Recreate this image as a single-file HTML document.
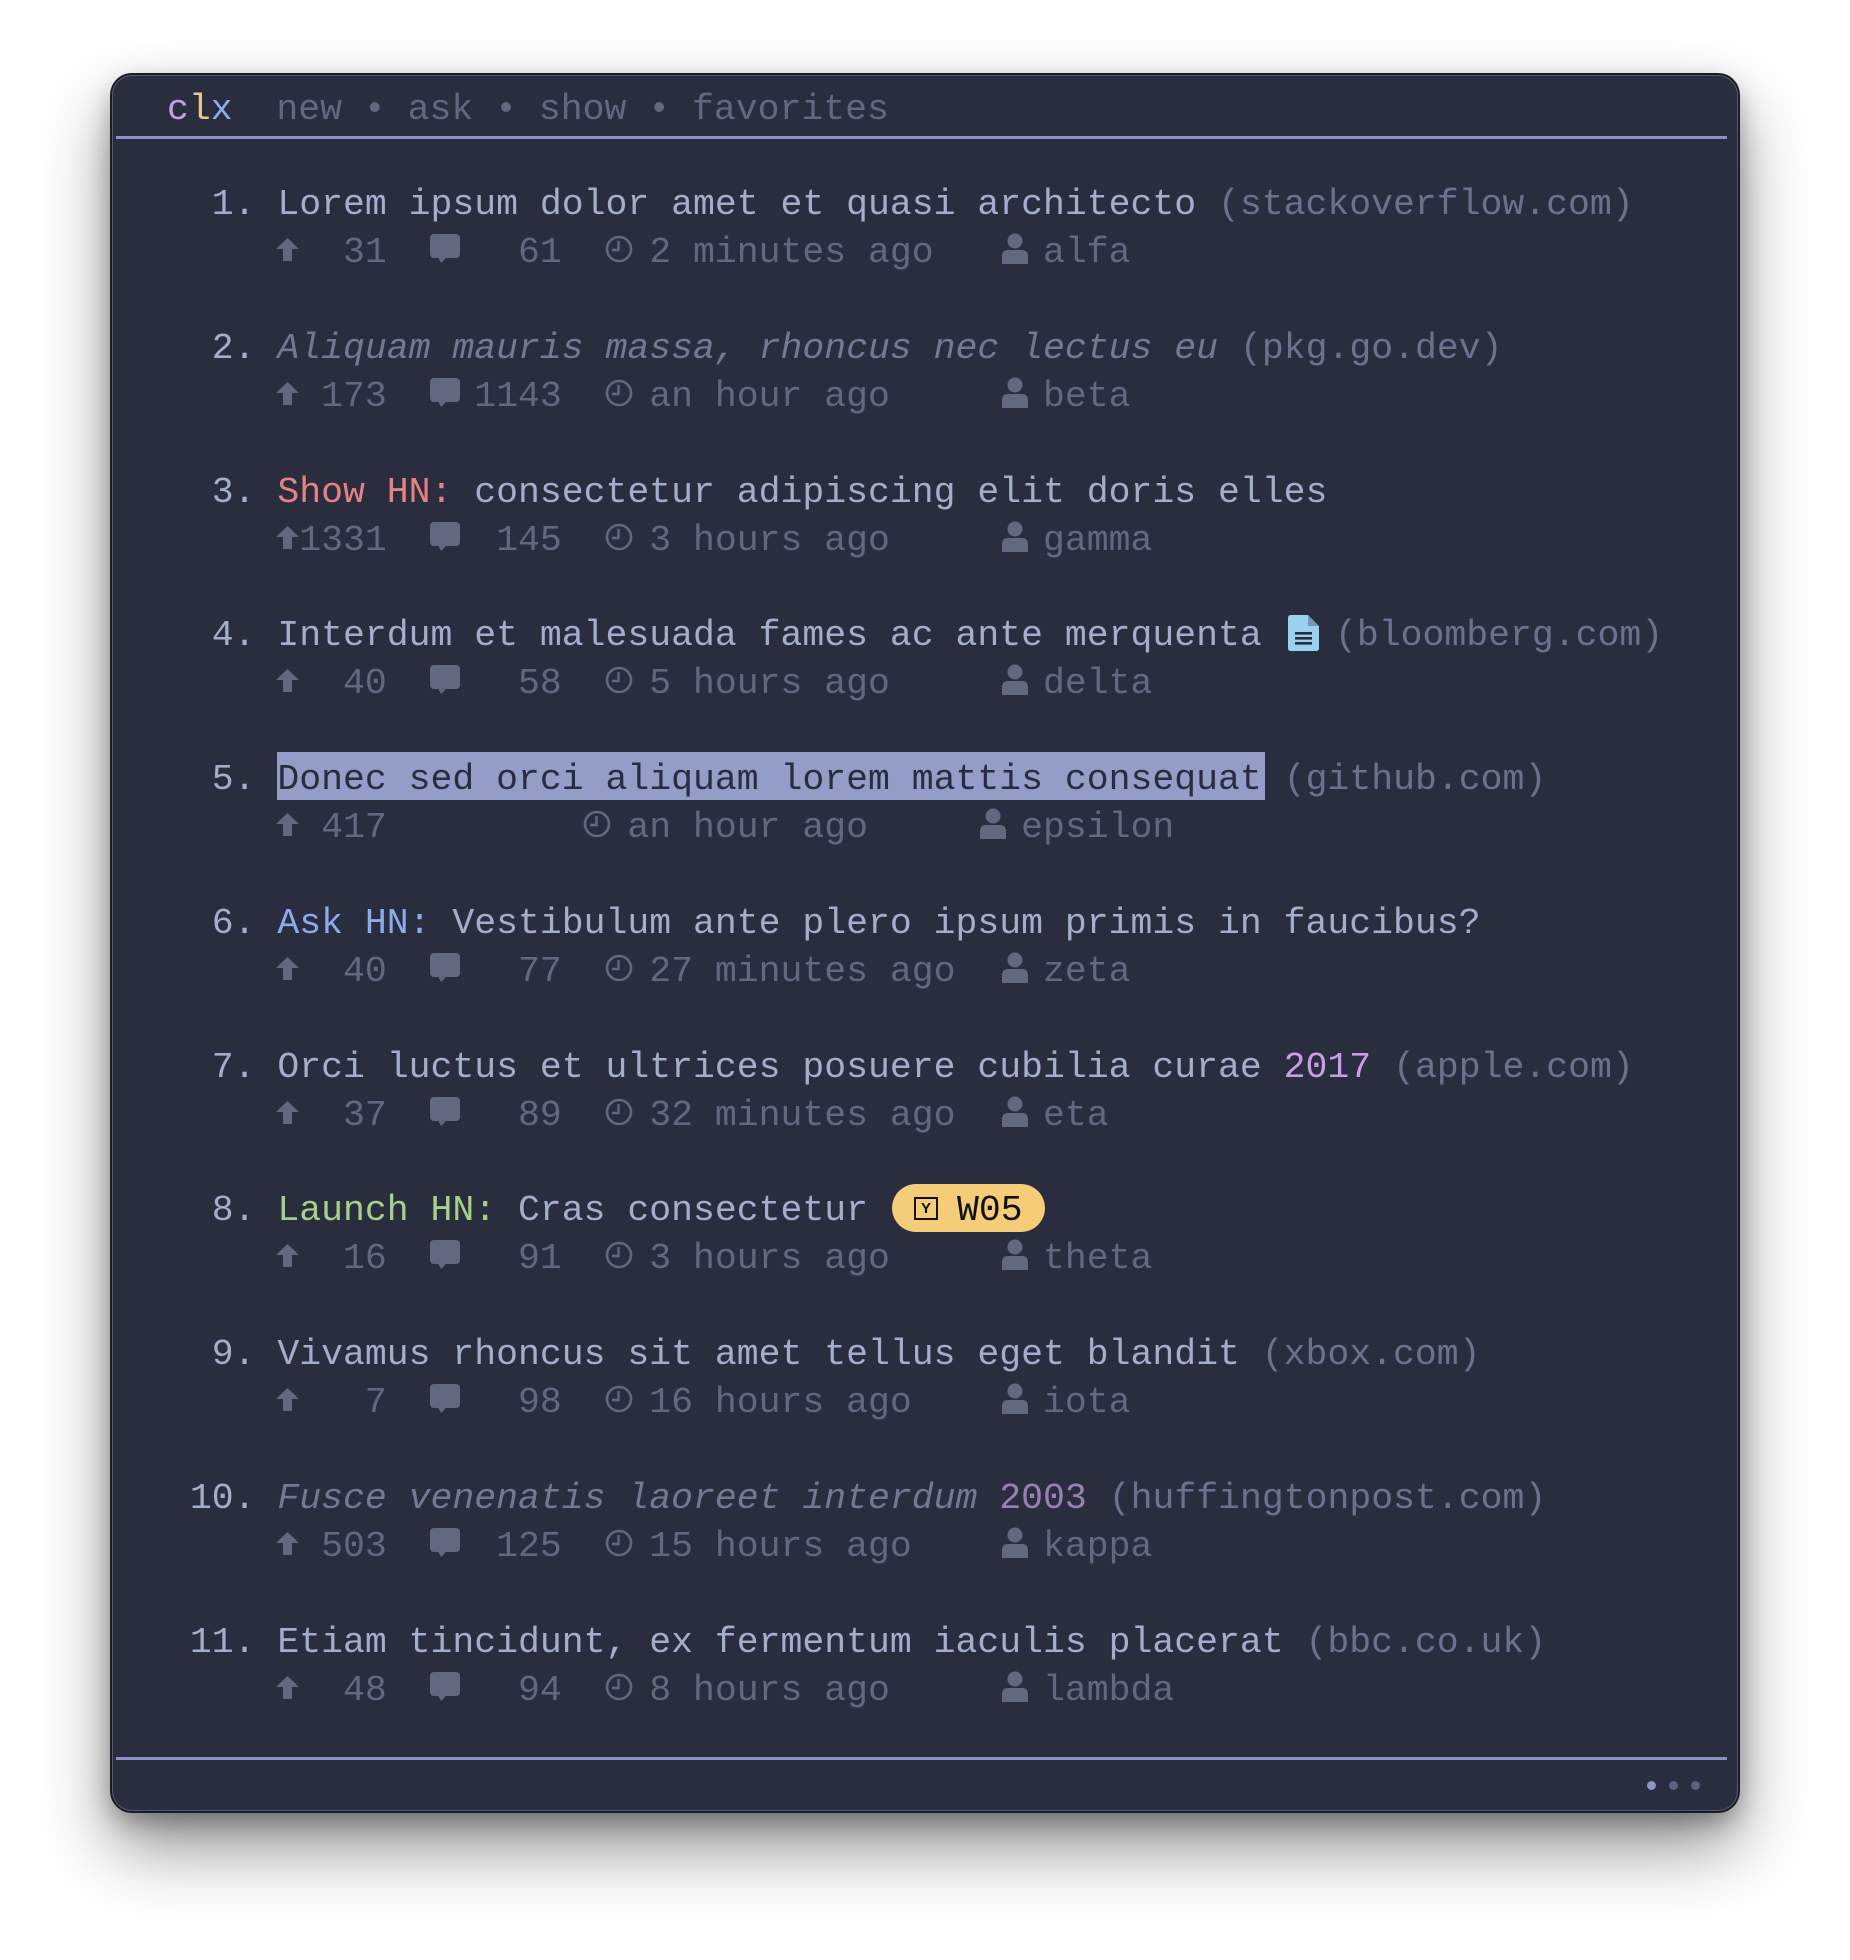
<!DOCTYPE html>
<html><head><meta charset="utf-8"><style>
html,body{margin:0;padding:0;background:#fff;}
body{width:1850px;height:1960px;position:relative;overflow:hidden;font-family:"Liberation Mono",monospace;font-size:36.46px;}
.win{position:absolute;left:112px;top:75px;width:1626px;height:1736px;border-radius:20px;background:#2a2d3e;box-shadow:0 0 0 2px #1a1b24,0 0 0 1px #55596c inset,0 35px 70px rgba(0,0,0,.45),0 10px 25px rgba(0,0,0,.3);}
.l{position:absolute;left:168px;white-space:pre;line-height:48px;height:48px;color:#a5adce;padding-top:4px;}
.m{color:#626880;}
.d{color:#6c7190;}
.it{font-style:italic;color:#737994;}
.ic{position:absolute;}
.hlb{position:absolute;background:#949cc8;}
.line{position:absolute;height:3px;background:#8c93c4;}
.dot{position:absolute;width:9px;height:9px;border-radius:50%;}
</style></head><body>
<div class="win"></div>
<div class="l" style="top:82px;left:167px"><span style="color:#ca9ee6">c</span><span style="color:#e5c890">l</span><span style="color:#8caaee">x</span><span class="m">  new • ask • show • favorites</span></div>
<div class="line" style="left:116px;width:1611px;top:136px"></div>
<div class="line" style="left:116px;width:1611px;top:1757px"></div>
<div class="dot" style="left:1647px;top:1781px;background:#8c93c4"></div>
<div class="dot" style="left:1669px;top:1781px;background:#5d6180"></div>
<div class="dot" style="left:1691px;top:1781px;background:#5d6180"></div>

<svg width="0" height="0" style="position:absolute">
<defs>
<symbol id="up" viewBox="0 0 23 23"><polygon points="11.5,0 23,11 16,11 16,23 7,23 7,11 0,11" fill="#626880"/></symbol>
<symbol id="cm" viewBox="0 0 30 29"><rect x="0" y="0" width="30" height="24" rx="4" fill="#626880"/><polygon points="8,23 17,23 11,29" fill="#626880"/></symbol>
<symbol id="ck" viewBox="0 0 28 28"><circle cx="14" cy="14" r="12" fill="none" stroke="#626880" stroke-width="2.6"/><path d="M13.5 6V15H7" fill="none" stroke="#626880" stroke-width="2.4"/></symbol>
<symbol id="us" viewBox="0 0 26 31"><circle cx="13" cy="8" r="7.5" fill="#626880"/><path d="M0 31V23Q0 17 6 17H20Q26 17 26 23V31Z" fill="#626880"/></symbol>
</defs></svg>

<!-- 1 -->
<div class="l" style="top:177px">  1. Lorem ipsum dolor amet et quasi architecto <span class="d">(stackoverflow.com)</span></div>
<div class="l m" style="top:225px">        31      61    2 minutes ago     alfa</div>
<svg class="ic" style="left:276px;top:238px" width="23" height="23"><use href="#up"/></svg>
<svg class="ic" style="left:430px;top:234px" width="30" height="29"><use href="#cm"/></svg>
<svg class="ic" style="left:605px;top:235px" width="28" height="28"><use href="#ck"/></svg>
<svg class="ic" style="left:1002px;top:233px" width="26" height="31"><use href="#us"/></svg>
<!-- 2 -->
<div class="l" style="top:320.75px">  2. <span class="it">Aliquam mauris massa, rhoncus nec lectus eu</span> <span class="d">(pkg.go.dev)</span></div>
<div class="l m" style="top:368.75px">       173    1143    an hour ago       beta</div>
<svg class="ic" style="left:276px;top:381.75px" width="23" height="23"><use href="#up"/></svg>
<svg class="ic" style="left:430px;top:377.75px" width="30" height="29"><use href="#cm"/></svg>
<svg class="ic" style="left:605px;top:378.75px" width="28" height="28"><use href="#ck"/></svg>
<svg class="ic" style="left:1002px;top:376.75px" width="26" height="31"><use href="#us"/></svg>
<!-- 3 -->
<div class="l" style="top:464.5px">  3. <span style="color:#e78284">Show HN:</span> consectetur adipiscing elit doris elles</div>
<div class="l m" style="top:512.5px">      1331     145    3 hours ago       gamma</div>
<svg class="ic" style="left:276px;top:525.5px" width="23" height="23"><use href="#up"/></svg>
<svg class="ic" style="left:430px;top:521.5px" width="30" height="29"><use href="#cm"/></svg>
<svg class="ic" style="left:605px;top:522.5px" width="28" height="28"><use href="#ck"/></svg>
<svg class="ic" style="left:1002px;top:520.5px" width="26" height="31"><use href="#us"/></svg>
<!-- 4 -->
<div class="l" style="top:608.25px">  4. Interdum et malesuada fames ac ante merquenta</div>
<svg class="ic" style="left:1288px;top:615px" width="31" height="36" viewBox="0 0 31 36"><path d="M3 0H20L31 11V33Q31 36 28 36H3Q0 36 0 33V3Q0 0 3 0Z" fill="#99d1f0"/><path d="M20 0V11H31" fill="#2a2d3e" opacity=".35"/><rect x="7" y="17" width="17" height="2.6" fill="#2a2d3e"/><rect x="7" y="22" width="17" height="2.6" fill="#2a2d3e"/><rect x="7" y="27" width="17" height="2.6" fill="#2a2d3e"/></svg>
<div class="l d" style="top:608.25px;left:1335px">(bloomberg.com)</div>
<div class="l m" style="top:656.25px">        40      58    5 hours ago       delta</div>
<svg class="ic" style="left:276px;top:669.25px" width="23" height="23"><use href="#up"/></svg>
<svg class="ic" style="left:430px;top:665.25px" width="30" height="29"><use href="#cm"/></svg>
<svg class="ic" style="left:605px;top:666.25px" width="28" height="28"><use href="#ck"/></svg>
<svg class="ic" style="left:1002px;top:664.25px" width="26" height="31"><use href="#us"/></svg>
<!-- 5 -->
<div class="hlb" style="left:277px;top:752px;width:988px;height:48px"></div>
<div class="l" style="top:752px">  5. <span style="color:#292c3c">Donec sed orci aliquam lorem mattis consequat</span> <span class="d">(github.com)</span></div>
<div class="l m" style="top:800px">       417           an hour ago       epsilon</div>
<svg class="ic" style="left:276px;top:813px" width="23" height="23"><use href="#up"/></svg>
<svg class="ic" style="left:583px;top:810px" width="28" height="28"><use href="#ck"/></svg>
<svg class="ic" style="left:980px;top:808px" width="26" height="31"><use href="#us"/></svg>
<!-- 6 -->
<div class="l" style="top:895.75px">  6. <span style="color:#8caaee">Ask HN:</span> Vestibulum ante plero ipsum primis in faucibus?</div>
<div class="l m" style="top:943.75px">        40      77    27 minutes ago    zeta</div>
<svg class="ic" style="left:276px;top:956.75px" width="23" height="23"><use href="#up"/></svg>
<svg class="ic" style="left:430px;top:952.75px" width="30" height="29"><use href="#cm"/></svg>
<svg class="ic" style="left:605px;top:953.75px" width="28" height="28"><use href="#ck"/></svg>
<svg class="ic" style="left:1002px;top:951.75px" width="26" height="31"><use href="#us"/></svg>
<!-- 7 -->
<div class="l" style="top:1039.5px">  7. Orci luctus et ultrices posuere cubilia curae <span style="color:#ca9ee6">2017</span> <span class="d">(apple.com)</span></div>
<div class="l m" style="top:1087.5px">        37      89    32 minutes ago    eta</div>
<svg class="ic" style="left:276px;top:1100.5px" width="23" height="23"><use href="#up"/></svg>
<svg class="ic" style="left:430px;top:1096.5px" width="30" height="29"><use href="#cm"/></svg>
<svg class="ic" style="left:605px;top:1097.5px" width="28" height="28"><use href="#ck"/></svg>
<svg class="ic" style="left:1002px;top:1095.5px" width="26" height="31"><use href="#us"/></svg>
<!-- 8 -->
<div class="l" style="top:1183.25px">  8. <span style="color:#a6d189">Launch HN:</span> Cras consectetur</div>
<div class="ic" style="left:892px;top:1184px;width:153px;height:48px;border-radius:24px;background:#f5cd78;"></div>
<div class="ic" style="left:914px;top:1197px;width:20px;height:19px;border:2px solid #111;font:bold 15px/19px 'Liberation Sans',sans-serif;text-align:center;color:#111">Y</div>
<div class="l" style="top:1183px;left:957px;color:#111">W05</div>
<div class="l m" style="top:1231.25px">        16      91    3 hours ago       theta</div>
<svg class="ic" style="left:276px;top:1244.25px" width="23" height="23"><use href="#up"/></svg>
<svg class="ic" style="left:430px;top:1240.25px" width="30" height="29"><use href="#cm"/></svg>
<svg class="ic" style="left:605px;top:1241.25px" width="28" height="28"><use href="#ck"/></svg>
<svg class="ic" style="left:1002px;top:1239.25px" width="26" height="31"><use href="#us"/></svg>
<!-- 9 -->
<div class="l" style="top:1327px">  9. Vivamus rhoncus sit amet tellus eget blandit <span class="d">(xbox.com)</span></div>
<div class="l m" style="top:1375px">         7      98    16 hours ago      iota</div>
<svg class="ic" style="left:276px;top:1388px" width="23" height="23"><use href="#up"/></svg>
<svg class="ic" style="left:430px;top:1384px" width="30" height="29"><use href="#cm"/></svg>
<svg class="ic" style="left:605px;top:1385px" width="28" height="28"><use href="#ck"/></svg>
<svg class="ic" style="left:1002px;top:1383px" width="26" height="31"><use href="#us"/></svg>
<!-- 10 -->
<div class="l" style="top:1470.75px"> 10. <span class="it">Fusce venenatis laoreet interdum </span><span style="color:#9a80b4">2003</span> <span class="d">(huffingtonpost.com)</span></div>
<div class="l m" style="top:1518.75px">       503     125    15 hours ago      kappa</div>
<svg class="ic" style="left:276px;top:1531.75px" width="23" height="23"><use href="#up"/></svg>
<svg class="ic" style="left:430px;top:1527.75px" width="30" height="29"><use href="#cm"/></svg>
<svg class="ic" style="left:605px;top:1528.75px" width="28" height="28"><use href="#ck"/></svg>
<svg class="ic" style="left:1002px;top:1526.75px" width="26" height="31"><use href="#us"/></svg>
<!-- 11 -->
<div class="l" style="top:1614.5px"> 11. Etiam tincidunt, ex fermentum iaculis placerat <span class="d">(bbc.co.uk)</span></div>
<div class="l m" style="top:1662.5px">        48      94    8 hours ago       lambda</div>
<svg class="ic" style="left:276px;top:1675.5px" width="23" height="23"><use href="#up"/></svg>
<svg class="ic" style="left:430px;top:1671.5px" width="30" height="29"><use href="#cm"/></svg>
<svg class="ic" style="left:605px;top:1672.5px" width="28" height="28"><use href="#ck"/></svg>
<svg class="ic" style="left:1002px;top:1670.5px" width="26" height="31"><use href="#us"/></svg>
</body></html>
